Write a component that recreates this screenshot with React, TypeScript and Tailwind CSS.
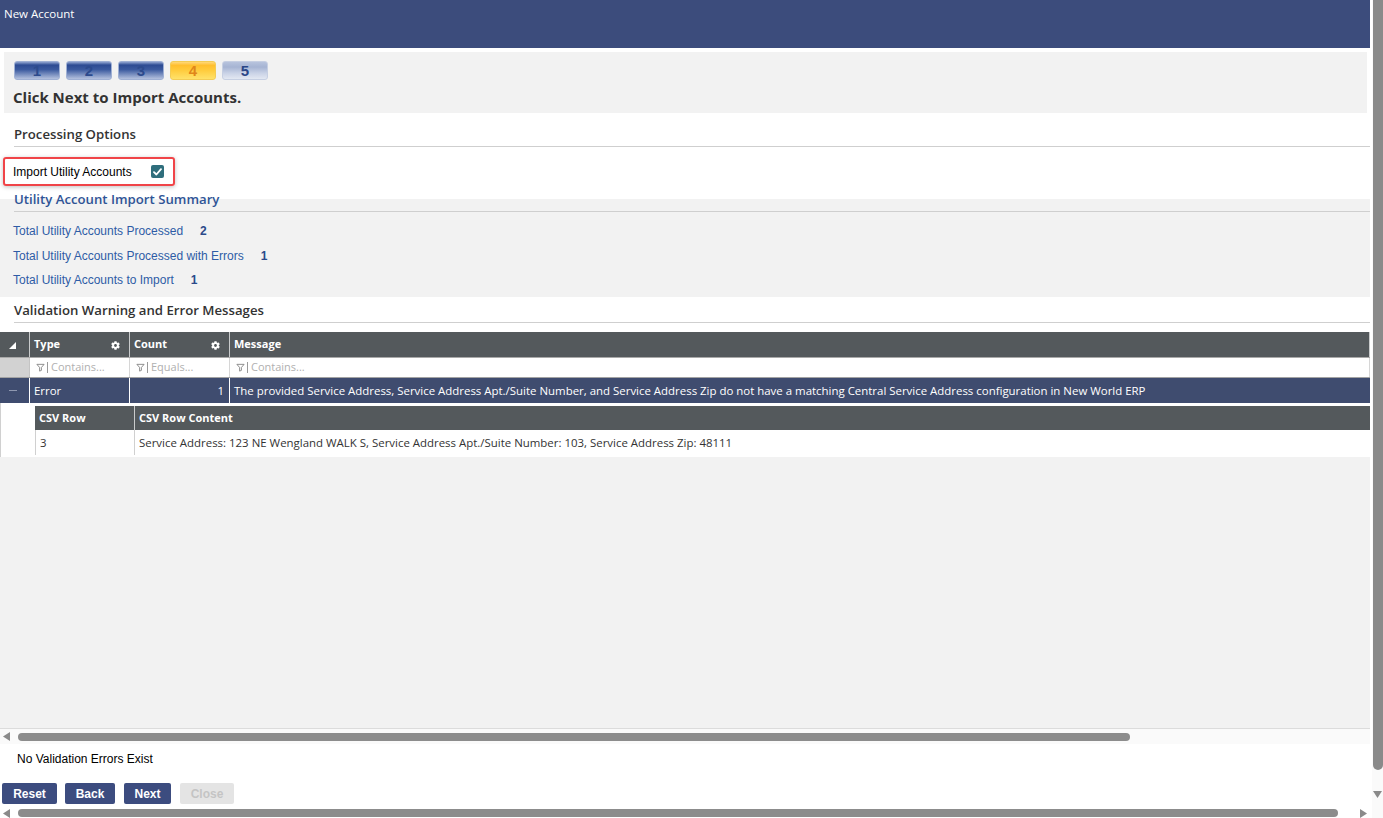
import { FaCog } from "react-icons/fa";

const seg = "font-['Open_Sans','Noto_Sans',sans-serif]";
const arial = "font-['Liberation_Sans',Arial,sans-serif]";

function StepButton({ n, state }: { n: number; state: "done" | "active" | "todo" }) {
  const bg =
    state === "done"
      ? "bg-[linear-gradient(to_bottom,#8ea3d0_0%,#2d4b93_18%,#3b5a9f_45%,#b4c1de_100%)] border-[#9fb0d4] text-[#2c4a8d]"
      : state === "active"
        ? "bg-[linear-gradient(to_bottom,#ffd87a_0%,#ffbf2e_20%,#ffcc3e_50%,#ffe26a_100%)] border-[#f3cc55] text-[#e0861a]"
        : "bg-[linear-gradient(to_bottom,#b7c3dd_0%,#a6b4d3_30%,#c9d2e6_65%,#e3e8f2_100%)] border-[#c6cfe2] text-[#2a4687]";
  return (
    <div
      className={`w-[46px] h-[19px] rounded-[3px] border flex items-end justify-center ${bg} ${arial} text-[15px] font-bold leading-[17px]`}
    >
      {n}
    </div>
  );
}

function Funnel() {
  return (
    <svg width="9" height="9" viewBox="0 0 10 10" className="shrink-0">
      <path d="M1 1.5h8L6 5v3.2L4 9V5z" fill="none" stroke="#777" strokeWidth="0.9" strokeLinejoin="round" />
    </svg>
  );
}

function FilterCell({ text, w }: { text: string; w: string }) {
  return (
    <div className={`${w} h-full border-r border-[#d6d6d6] flex items-center pl-[6px] gap-[2px]`}>
      <Funnel />
      <span className="w-px h-[11px] bg-[#9a9a9a]" />
      <span className={`${seg} text-[11px] text-[#b0b0b0] ml-[1px]`}>{text}</span>
    </div>
  );
}

function HeadCell({ label, w, gear }: { label: string; w: string; gear?: boolean }) {
  return (
    <div className={`${w} h-full border-r border-[#c9cbcc] flex items-start justify-between pl-[4px] pr-[9px] pt-[5px]`}>
      <span className={`${seg} text-[11px] font-bold text-white leading-[14px]`}>{label}</span>
      {gear && <FaCog className="text-white mt-[4px]" size={9} />}
    </div>
  );
}

function SummaryRow({ label, value }: { label: string; value: number }) {
  return (
    <div className={`flex items-center h-[16px] ${arial} text-[12px]`}>
      <span className="text-[#2e5ca6]">{label}</span>
      <span className="ml-[17px] font-bold text-[#2b4a8a]">{value}</span>
    </div>
  );
}

function ActionButton({ label, w, disabled }: { label: string; w: string; disabled?: boolean }) {
  return (
    <button
      type="button"
      className={`${w} h-[21px] rounded-[2px] ${arial} text-[12px] font-bold ${
        disabled ? "bg-[#e4e4e4] text-[#c4c4c4]" : "bg-[#3c4c7f] text-white"
      }`}
    >
      {label}
    </button>
  );
}

export default function App() {
  return (
    <div className="w-[1383px] h-[818px] overflow-hidden bg-white flex">
      <div className="w-[1372px] h-full flex flex-col">
        {/* title bar */}
        <div className="w-[1370px] h-[48px] shrink-0 bg-[#3c4c7c] pl-[4px] pt-[6px]">
          <div className={`${seg} text-[11.5px] leading-[16px] text-white`}>New Account</div>
        </div>

        {/* wizard steps */}
        <div className="ml-[4px] mt-[4px] w-[1363px] h-[61px] shrink-0 bg-[#f2f2f2] pl-[10px] pt-[9px]">
          <div className="flex gap-[6px]">
            <StepButton n={1} state="done" />
            <StepButton n={2} state="done" />
            <StepButton n={3} state="done" />
            <StepButton n={4} state="active" />
            <StepButton n={5} state="todo" />
          </div>
          <div className={`${seg} mt-[7px] -ml-[1px] text-[15px] font-bold text-[#333] leading-[20px]`}>
            Click Next to Import Accounts.
          </div>
        </div>

        {/* processing options */}
        <div className="ml-[14px] w-[1356px] mt-[11px] pb-[2px] border-b border-[#cfcfcf] shrink-0">
          <div className={`${seg} text-[13.2px] font-semibold text-[#333] leading-[20px]`}>Processing Options</div>
        </div>
        <div className="ml-[3px] mt-[10px] w-[172px] h-[29px] shrink-0 border-2 border-[#f04448] rounded-[3px] shadow-[0_1px_4px_rgba(0,0,0,0.25)] flex items-center pl-[8px]">
          <span className={`${arial} text-[12px] text-black`}>Import Utility Accounts</span>
          <span className="ml-[19px] w-[13px] h-[13px] rounded-[2px] bg-[#2f6e7c] flex items-center justify-center">
            <svg width="9" height="8" viewBox="0 0 9 8">
              <path d="M1 4.2 3.4 6.5 8 1.2" fill="none" stroke="white" strokeWidth="1.8" strokeLinecap="round" strokeLinejoin="round" />
            </svg>
          </span>
        </div>

        {/* summary */}
        <div className="mt-[13px] w-[1370px] h-[98px] shrink-0 bg-[#f2f2f2]">
          <div className="ml-[14px] -mt-[8px] pb-[4px] border-b border-[#cfcfcf]">
            <div className={`${seg} text-[13.2px] font-semibold text-[#2f5496] leading-[16px]`}>
              Utility Account Import Summary
            </div>
          </div>
          <div className="ml-[13px] mt-[11px] flex flex-col gap-[8.5px]">
            <SummaryRow label="Total Utility Accounts Processed" value={2} />
            <SummaryRow label="Total Utility Accounts Processed with Errors" value={1} />
            <SummaryRow label="Total Utility Accounts to Import" value={1} />
          </div>
        </div>

        {/* validation */}
        <div className="ml-[14px] w-[1356px] mt-[5px] pb-[4px] border-b border-[#cfcfcf] shrink-0">
          <div className={`${seg} text-[13.2px] font-semibold text-[#333] leading-[16px]`}>
            Validation Warning and Error Messages
          </div>
        </div>

        {/* grid */}
        <div className="mt-[9px] w-[1370px] shrink-0">
          <div className="h-[26px] bg-[#54595c] flex border-b border-[#a9a9a9]">
            <div className="w-[30px] h-full border-r border-[#c9cbcc] flex items-start pl-[9px] pt-[10px]">
              <svg width="7" height="7" viewBox="0 0 7 7">
                <polygon points="0,7 7,7 7,0" fill="white" />
              </svg>
            </div>
            <HeadCell label="Type" w="w-[100px]" gear />
            <HeadCell label="Count" w="w-[100px]" gear />
            <HeadCell label="Message" w="flex-1" />
          </div>
          <div className="h-[20px] flex bg-white border-b border-[#a3a3a3]">
            <div className="w-[30px] h-full bg-[#d2d2d2] border-r border-[#c4c4c4]" />
            <FilterCell text="Contains..." w="w-[100px]" />
            <FilterCell text="Equals..." w="w-[100px]" />
            <FilterCell text="Contains..." w="flex-1" />
          </div>
          <div className={`h-[25px] flex bg-[#3f4c6f] text-white ${seg} text-[11.45px]`}>
            <div className="w-[30px] h-full border-r border-white flex items-center pl-[9px]">
              <span className="w-[8px] h-px bg-[#8f98b0]" />
            </div>
            <div className="w-[100px] h-full border-r border-white flex items-center pl-[4px]">Error</div>
            <div className="w-[100px] h-full border-r border-white flex items-center justify-end pr-[5px]">1</div>
            <div className="flex-1 h-full flex items-center pl-[4px] whitespace-nowrap">
              The provided Service Address, Service Address Apt./Suite Number, and Service Address Zip do not have a
              matching Central Service Address configuration in New World ERP
            </div>
          </div>
          <div className="flex bg-white border-l border-[#d0d0d0] pt-[3px] pb-[2px]">
            <div className="w-[34px]" />
            <div className="flex-1">
              <div className="h-[24px] bg-[#54595c] flex">
                <div className={`w-[100px] h-full border-r border-[#c9cbcc] flex items-center pl-[4px] ${seg} text-[11px] font-bold text-white`}>
                  CSV Row
                </div>
                <div className={`flex-1 h-full flex items-center pl-[4px] ${seg} text-[11px] font-bold text-white`}>
                  CSV Row Content
                </div>
              </div>
              <div className={`h-[25px] flex ${seg} text-[11.45px] text-[#333]`}>
                <div className="w-[100px] h-full border-l border-r border-[#d0d0d0] flex items-center pl-[4px]">3</div>
                <div className="flex-1 h-full flex items-center pl-[4px] whitespace-nowrap">
                  Service Address: 123 NE Wengland WALK S, Service Address Apt./Suite Number: 103, Service Address Zip: 48111
                </div>
              </div>
            </div>
          </div>
        </div>

        {/* empty grid area */}
        <div className="flex-1 w-[1370px] bg-[#f2f2f2] border-b border-[#dcdcdc]" />
        <div className="w-[1370px] h-[15px] shrink-0 bg-[#fafafa] flex items-center">
          <svg width="7" height="9" viewBox="0 0 7 9" className="ml-[3px]">
            <polygon points="7,0 7,9 0,4.5" fill="#8a8a8a" />
          </svg>
          <div className="ml-[8px] w-[1112px] h-[8px] rounded-full bg-[#8c8c8c]" />
        </div>

        {/* footer */}
        <div className={`h-[29px] shrink-0 pl-[17px] flex items-center ${arial} text-[12px] text-black`}>
          No Validation Errors Exist
        </div>
        <div className="flex pl-[2px] mt-[10px] gap-[8px] shrink-0">
          <ActionButton label="Reset" w="w-[55px]" />
          <ActionButton label="Back" w="w-[50px]" />
          <ActionButton label="Next" w="w-[47px] ml-[1px]" />
          <ActionButton label="Close" w="w-[54px] ml-[1px]" disabled />
        </div>

        {/* page horizontal scrollbar */}
        <div className="h-[10px] shrink-0 mt-[4px] flex items-center">
          <svg width="7" height="9" viewBox="0 0 7 9" className="ml-[3px]">
            <polygon points="7,0 7,9 0,4.5" fill="#8a8a8a" />
          </svg>
          <div className="ml-[8px] w-[1320px] h-[8px] rounded-full bg-[#8c8c8c]" />
          <svg width="7" height="9" viewBox="0 0 7 9" className="ml-[22px]">
            <polygon points="0,0 0,9 7,4.5" fill="#8a8a8a" />
          </svg>
        </div>
      </div>

      {/* page vertical scrollbar */}
      <div className="w-[11px] h-full bg-[#fafafa] flex flex-col items-center">
        <div className="w-[10px] h-[770px] rounded-b-full bg-[#8a8a8a]" />
        <svg width="9" height="7" viewBox="0 0 9 7" className="mt-[21px]">
          <polygon points="0,0 9,0 4.5,7" fill="#8a8a8a" />
        </svg>
      </div>
    </div>
  );
}
